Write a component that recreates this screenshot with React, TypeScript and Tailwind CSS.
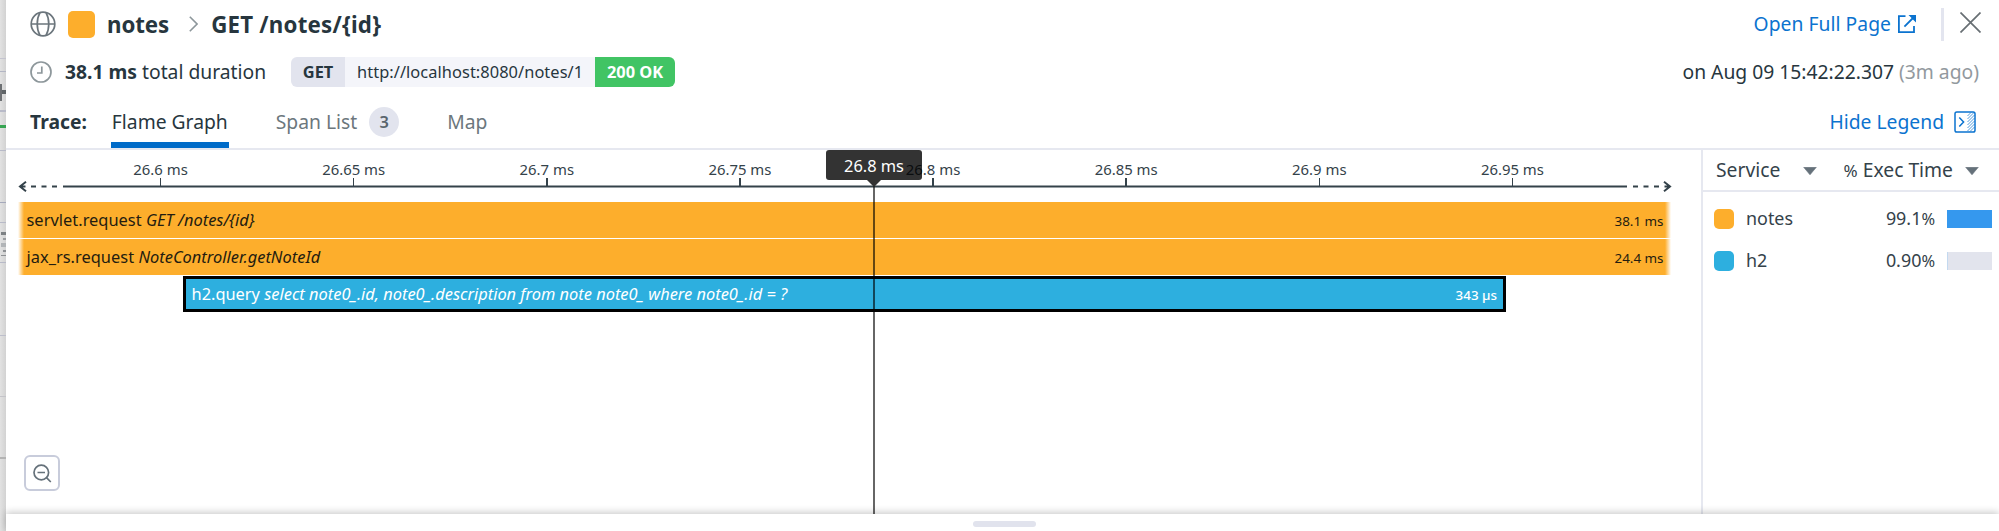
import React from 'react';

const ticks = ['26.6 ms', '26.65 ms', '26.7 ms', '26.75 ms', '26.8 ms', '26.85 ms', '26.9 ms', '26.95 ms'];

function Globe() {
  return (
    <svg className="h-[26px] w-[26px] shrink-0" viewBox="0 0 26 26" fill="none" stroke="#6b757c" strokeWidth="1.7">
      <circle cx="13" cy="13" r="11.8" />
      <path d="M10 1.600C6.300 8 6.300 18 10 24.400M16 1.600C19.700 8 19.700 18 16 24.400M1.200 13H24.800" strokeWidth="1.7" />
    </svg>
  );
}

function Clock() {
  return (
    <svg className="h-[22px] w-[22px] shrink-0" viewBox="0 0 22 22" fill="none" stroke="#8d979b" strokeWidth="1.7">
      <circle cx="11" cy="11" r="10" />
      <path d="M11.800 5.600V12H7" />
    </svg>
  );
}

function External() {
  return (
    <svg className="h-[20px] w-[20px] shrink-0" viewBox="0 0 20 20" fill="none" stroke="#0b73cf" strokeWidth="1.8">
      <path d="M8.500 2.200H1.900V18.100H17V12M18 2L7.400 12.600" />
      <path d="M11.500 1H19V8.500L16.700 6.200L13.800 3.300Z" fill="#0b73cf" stroke="none" />
    </svg>
  );
}

function LegendIcon() {
  return (
    <svg className="h-[22px] w-[22px] shrink-0" viewBox="0 0 22 22" fill="none" stroke="#0b73cf" strokeWidth="1.5">
      <rect x="1" y="1" width="20" height="20" rx="1.8" />
      <path d="M5.3 6.5L9.6 11L5.3 15.5" />
      <path d="M13.5 5L17 1.5M13.5 8L20 1.5M13.5 11L20.5 4M13.5 14L20.5 7M13.5 17L20.5 10M13.5 20L20.5 13M16 20.5L20.5 16" strokeWidth="0.9" opacity="0.8" />
    </svg>
  );
}

function Caret() {
  return (
    <svg className="h-[8px] w-[14px] shrink-0" viewBox="0 0 14 8">
      <path d="M0.7 0.3H13.3L7 7.8Z" fill="#65717a" stroke="#65717a" strokeWidth="0.6" strokeLinejoin="round" />
    </svg>
  );
}

function Backdrop() {
  return (
    <div className="flex w-[6px] shrink-0 flex-col overflow-hidden bg-linear-to-r from-[#e2e2e2] to-[#d2d2d2]">
      <div className="h-[59px] border-b border-[#c4c4cf]" />
      <div className="h-[13px] border-b border-[#b3b6c4]" />
      <div className="flex h-[40px] items-center border-b-2 border-[#b8bac8] pt-[2px]">
        <div className="h-[17px] w-[2px] bg-[#6d7073]" />
        <div className="h-[4px] w-[4px] bg-[#5f6467]" />
      </div>
      <div className="h-[16px] border-b-[3px] border-[#37a452]" />
      <div className="h-[23px] border-b border-[#b8bac8]" />
      <div className="h-[52px] border-b border-[#a5a9bb]" />
      <div className="h-[20px] border-b border-[#b8bac8]" />
      <div className="flex h-[40px] flex-col items-end gap-[3px] border-b border-[#b8bac8] pt-[9px]">
        <div className="h-[3px] w-[5px] bg-[#7d8184]" />
        <div className="h-[2px] w-[3px] bg-[#9a9da0]" />
        <div className="h-[4px] w-[5px] bg-[#b1b4b7]" />
        <div className="h-[2px] w-[3px] bg-[#8e9194]" />
        <div className="h-[1px] w-[5px] bg-[#8e9194]" />
      </div>
      <div className="h-[73px] border-b border-[#bdbfcb]" />
      <div className="h-[61px] border-b border-[#c4c4c9]" />
      <div className="h-[62px] border-b-2 border-[#b4b4b4]" />
    </div>
  );
}

function Header() {
  return (
    <header className="shrink-0 border-b-2 border-[#e6e8f0]">
      <div className="flex h-[48px] items-center pr-[17px] pl-[24px]">
        <Globe />
        <div className="ml-[12px] h-[27px] w-[27px] rounded-[5px] bg-[#fdae2c]" />
        <span className="ml-[12px] pt-px text-[22.3px] font-bold tracking-[-0.1px]">notes</span>
        <svg className="ml-[20px] h-[16px] w-[9px]" viewBox="0 0 9 16" fill="none" stroke="#8d979b" strokeWidth="1.6">
          <path d="M0.8 0.8L8 8L0.8 15.2" />
        </svg>
        <span className="ml-[13px] pt-px text-[22.3px] font-bold tracking-[0.22px]">GET /notes/{'{id}'}</span>
        <a className="ml-auto text-[19.3px] tracking-[0.04px] text-[#0b73cf]">Open Full Page</a>
        <span className="ml-[6px]"><External /></span>
        <div className="ml-[24px] h-[33px] w-[3px] bg-[#e3e5ef]" />
        <svg className="mr-[1px] mb-[4px] ml-[16px] h-[21px] w-[21px]" viewBox="0 0 21 21" stroke="#686f74" strokeWidth="1.7">
          <path d="M0.5 0.5L20.5 20.5M20.5 0.5L0.5 20.5" />
        </svg>
      </div>
      <div className="flex h-[48px] items-center pr-[20px] pl-[24px] text-[19.3px]">
        <Clock />
        <span className="ml-[13px]"><b>38.1 ms</b> total duration</span>
        <div className="ml-[25px] flex h-[30px] items-center overflow-hidden rounded-[6px] text-[16.4px] leading-[30px]">
          <span className="w-[54px] bg-[#e2e4ee] text-center font-bold">GET</span>
          <span className="w-[250px] bg-[#f4f5fa] text-center tracking-[0.06px]">http://localhost:8080/notes/1</span>
          <span className="w-[80px] bg-[#41c464] text-center font-bold text-white">200 OK</span>
        </div>
        <span className="ml-auto">on Aug 09 15:42:22.307 <span className="text-[#92999e]">(3m ago)</span></span>
      </div>
      <div className="flex h-[52px] items-stretch pr-[23px] pl-[24px] text-[19.3px] leading-[52px]">
        <b>Trace:</b>
        <div className="ml-[24px] border-b-[6px] border-[#006bc8] px-[1px]">Flame Graph</div>
        <span className="ml-[47px] text-[#6c777d]">Span List</span>
        <span className="mt-[11px] ml-[12px] h-[30px] w-[30px] rounded-full bg-[#e2e4ee] text-center text-[16.4px] leading-[29px] font-semibold text-[#59656d]">3</span>
        <span className="ml-[48px] text-[#6c777d]">Map</span>
        <a className="ml-auto text-[#0b73cf]">Hide Legend</a>
        <span className="ml-[10px] flex items-center"><LegendIcon /></span>
      </div>
    </header>
  );
}

function Axis() {
  return (
    <div className="h-[52px] pt-[9px]">
      <div className="ml-[58px] grid w-[1545px] grid-cols-8 text-center text-[14.9px] leading-[20px] text-[#34424a]">
        {ticks.map((t) => (
          <div key={t} className="flex flex-col items-center">
            <span className="h-[19px]">{t}</span>
            <div className="h-[8px] w-[1.5px] bg-[#34424a]" />
          </div>
        ))}
      </div>
      <svg className="-mt-[5px] ml-[12px] block h-[11px] w-[1654px]" viewBox="0 0 1654 11" fill="none" stroke="#34424a" strokeWidth="1.8">
        <path d="M45 5.5H1609M13 5.5H18M23.500 5.5H28.500M34 5.500H39M1615 5.5H1620M1625.500 5.500H1630.500M1636 5.500H1641" />
        <path d="M8 0.800L2 5.500L8 10.200M2 5.500H7.500M1646 0.800L1652 5.500L1646 10.200M1652 5.500H1646.500" strokeWidth="2" />
      </svg>
    </div>
  );
}

function FadedSpan({ name, resource, time }: { name: string; resource: string; time: string }) {
  return (
    <div className="ml-[12px] flex h-[36px] w-[1653px] items-center justify-between bg-[linear-gradient(90deg,transparent,#fdae2c_6px,#fdae2c_calc(100%-6px),transparent)] pr-[7.5px] pl-[8.5px] text-[16.4px] text-[#241c10]">
      <span className="tracking-[0.02px]">{name} <i>{resource}</i></span>
      <span className="pt-[2px] text-[13.4px]">{time}</span>
    </div>
  );
}

function Flame() {
  return (
    <section className="relative w-[1695px] shrink-0">
      <Axis />
      <div className="flex flex-col gap-[1px]">
        <FadedSpan name="servlet.request" resource="GET /notes/{id}" time="38.1 ms" />
        <FadedSpan name="jax_rs.request" resource="NoteController.getNoteId" time="24.4 ms" />
        <div className="ml-[177px] flex h-[36px] w-[1323px] items-center justify-between border-[3px] border-black bg-[#2dafdf] pr-[6px] pl-[5.5px] text-[16.4px] text-white">
          <span>h2.query <i>select note0_.id, note0_.description from note note0_ where note0_.id = ?</i></span>
          <span className="pt-[2px] text-[13.4px] font-medium">343 µs</span>
        </div>
      </div>
      <button className="absolute top-[305px] left-[18px] flex h-[36px] w-[36px] items-center justify-center rounded-[6px] border-2 border-[#c8ccdb]">
        <svg className="h-[19px] w-[19px]" viewBox="0 0 19 19" fill="none" stroke="#65717a" strokeWidth="1.7">
          <circle cx="8.300" cy="8.500" r="7.300" />
          <path d="M4.500 8.500H12M13.500 13.700L17.800 18" />
        </svg>
      </button>
      <div className="absolute top-[36px] bottom-0 left-[867px] w-[2px] bg-black/60" />
      <div className="absolute top-0 left-[820px] flex w-[96px] flex-col items-center">
        <div className="h-[30px] w-full rounded-[3px] bg-black/80 text-center text-[16.4px] leading-[31px] text-white">26.8 ms</div>
        <svg className="h-[7px] w-[14px]" viewBox="0 0 14 7"><path d="M0 0H14L7 7Z" fill="#333" /></svg>
      </div>
    </section>
  );
}

const services = [
  { name: 'notes', value: 99.1, label: '99.1%', swatch: 'bg-[#fdae2c]', fill: 'bg-[#3598ee]' },
  { name: 'h2', value: 0.9, label: '0.90%', swatch: 'bg-[#2dafdf]', fill: 'bg-[#c3d9f0]' },
];

function Legend() {
  return (
    <aside className="flex-1 border-l-2 border-[#e6e8f0] text-[17.9px] text-[#34424a]">
      <div className="flex h-[42px] items-center border-b-2 border-[#e6e8f0] pr-[20px] pl-[13px] text-[19.3px]">
        <span className="pt-px">Service</span>
        <span className="ml-[23px] flex pt-px"><Caret /></span>
        <span className="ml-auto pt-px"><span className="text-[17px]">%</span> Exec Time</span>
        <span className="ml-[12px] flex pt-px"><Caret /></span>
      </div>
      <div className="flex flex-col gap-px pt-[6px]">
        {services.map((s) => (
          <div key={s.name} className="flex h-[41px] items-center pr-[7px] pl-[11px]">
            <div className={`h-[20px] w-[20px] rounded-[5px] ${s.swatch}`} />
            <span className="ml-[12px]">{s.name}</span>
            <span className="mr-[12px] ml-auto">{s.label.slice(0, -1)}<span className="text-[16.4px]">%</span></span>
            <div className="h-[18px] w-[45px] bg-[#e2e4ed]">
              <div className={`h-full ${s.fill}`} style={{ width: `max(1px, ${s.value}%)` }} />
            </div>
          </div>
        ))}
      </div>
    </aside>
  );
}

export default function App() {
  return (
    <div className="flex h-[531px] w-full overflow-hidden bg-white font-['Noto_Sans',sans-serif] text-[#27363e]">
      <Backdrop />
      <main className="flex min-w-0 flex-1 flex-col">
        <Header />
        <div className="flex min-h-0 flex-1">
          <Flame />
          <Legend />
        </div>
        <footer className="relative flex h-[17px] shrink-0 justify-center bg-white pt-[7px] pl-[3px] shadow-[0_-2px_7px_rgba(0,0,0,0.2)]">
          <div className="h-[6px] w-[63px] rounded-full bg-[#e1e3ed]" />
        </footer>
      </main>
    </div>
  );
}
